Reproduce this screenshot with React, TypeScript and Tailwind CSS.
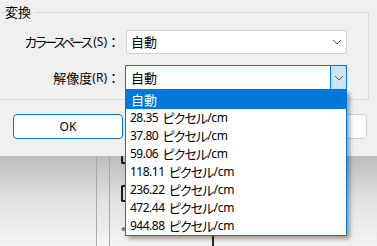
import React from "react";

const nums = ["28.35", "37.80", "59.06", "118.11", "236.22", "472.44", "944.88"];

function Chevron() {
  return (
    <svg width="10" height="6" viewBox="0 0 10 6" className="block">
      <path d="M1 1 L5 5 L9 1" fill="none" stroke="#5f5f5f" strokeWidth="1" />
    </svg>
  );
}

function Item({ num }: { num: string }) {
  return (
    <>
      <span className="text-[12px] tracking-[-0.5px]">{num}</span>
      <span className="ml-[4px] tracking-[-2px]">ピクセル</span>
      <span className="ml-[1px] text-[12px] tracking-[-0.3px]">/cm</span>
    </>
  );
}

export default function App() {
  return (
    <div className="relative w-[377px] h-[246px] overflow-hidden bg-[#f0f0f0] text-black text-[13px] leading-[16px] font-['Noto_Sans','Noto_Sans_CJK_JP',sans-serif]">
      {/* dialog */}
      <div className="h-[156px] flex flex-col">
        <div className="relative mt-[12px] ml-[-2px] w-[371px] h-[88px] border-t border-r border-b border-[#dcdcdc]">
          <span className="absolute left-[7px] top-[-9px] bg-[#f0f0f0] pr-[3px]">変換</span>
          <div className="pt-[17px] flex flex-col gap-[11px]">
            <div className="flex items-center">
              <div className="w-[122px] flex justify-end items-center">
                <span className="tracking-[-3.3px]">カラースペース</span>
                <span className="ml-[3px] text-[12px]">(S)</span>
                <span>：</span>
              </div>
              <div className="ml-[6px] w-[221px] h-[24px] flex items-center justify-between rounded-[3px] border border-[#d0d0d0] bg-white pl-[4px] pr-[4px]">
                <span>自動</span>
                <Chevron />
              </div>
            </div>
            <div className="flex items-center">
              <div className="w-[122px] flex justify-end items-center">
                <span>解像度</span>
                <span className="text-[12px]">(R)</span>
                <span>：</span>
              </div>
              <div className="ml-[5px] w-[222px] h-[25px] flex border border-[#0078d4] bg-white">
                <div className="flex-1 flex items-center pl-[5px]">自動</div>
                <div className="w-[16px] h-full flex items-center justify-center bg-[#cce4f7] border-l border-[#0078d4]">
                  <Chevron />
                </div>
              </div>
            </div>
          </div>
        </div>
        <div className="mt-[14px] flex">
          <div className="ml-[13px] w-[110px] h-[25px] flex items-center justify-center rounded-[4px] border border-[#0078d4] bg-[#fdfdfd] text-[12px]">
            OK
          </div>
          <div className="ml-auto mr-[10px] w-[110px] h-[25px] rounded-[4px] border border-[#d0d0d0] bg-[#fdfdfd]" />
        </div>
      </div>

      {/* window behind */}
      <div className="relative h-[90px] flex bg-gradient-to-b from-[#bcbcbc] via-[#e2e2e2] to-[#f3f3f3]">
        <div className="w-[96px]" />
        <div className="w-[14px] h-full border-l border-r border-[#a9a9a9]" />
        <div className="absolute left-[121px] top-[0px] w-[6px] h-[8px] border-l-2 border-b-2 border-[#1a1a1a] rounded-bl-[2px]" />
        <div className="absolute left-[121px] top-[29px] w-[6px] h-[17px] border-l-2 border-t-2 border-b-2 border-[#1a1a1a] rounded-l-[2px]" />
        <div className="absolute left-[121px] top-[70px] text-[9px] leading-[10px] text-[#333]">*</div>
        <div className="absolute left-[212px] top-[79px] w-[2px] h-[11px] bg-[#2a2a2a]" />
      </div>

      {/* dropdown list */}
      <div className="absolute left-[125px] top-[90px] w-[222px] h-[146px] bg-white border border-[#0078d7] shadow-[3px_3px_4px_rgba(0,0,0,0.35)]">
        <div className="h-[18px] flex items-center pl-[5px] bg-[#0078d7] text-white">自動</div>
        {nums.map((n) => (
          <div key={n} className="h-[18px] flex items-center pl-[4px]">
            <Item num={n} />
          </div>
        ))}
      </div>
    </div>
  );
}
